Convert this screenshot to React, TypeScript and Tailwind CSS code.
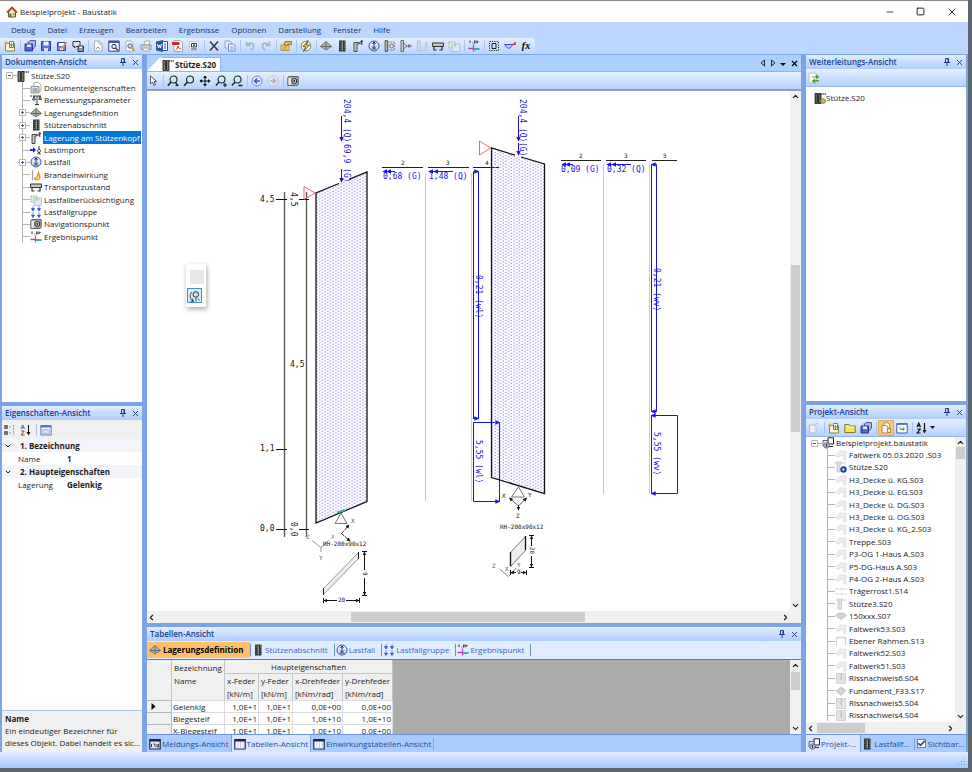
import React from 'react'
import { clsx } from 'clsx'
import { Check, ChevronDown, ChevronLeft, ChevronRight, ChevronUp, Minus, Square, X } from 'lucide-react'

const icons = {
  house: (
    <>
      <path d="M2.5 6v5h7V6L6 2.5z" fill="#f6e3a0" stroke="#6b5320" />
      <path d="M.8 6.5 6 1.3l5.2 5.2" fill="none" stroke="#9b3a22" strokeWidth="1.4" />
      <path d="M3.5 7.5h2V11h-2z" fill="#3d7d3a" />
      <path d="M7 7.5h1.5V9H7z" fill="#3a6dc4" />
    </>
  ),
  newItem: (
    <>
      <path d="M1.5 3.5h9v7.500h-9z" fill="#fdf6cf" stroke="#8a8148" />
      <path d="M5.500 1.500h4v6h-4z" fill="#fff" stroke="#777" />
      <path d="M7.500 3v4M5.500 5h4" stroke="#5a9a3c" />
      <path d="M2 1v4M0 3h4" stroke="#e8a12c" />
    </>
  ),
  saveAll: (
    <>
      <path d="M4 3 6 .500h5.500V6L9 9z" fill="#a9b6f0" stroke="#4a57b0" />
      <path d="M1 4h7.500v7H1z" fill="#5365cc" stroke="#26308c" strokeWidth=".900" />
      <path d="M3 4.500h4v2.500H3z" fill="#e6ebff" />
      <path d="M3 2.500 4.500 1M10 8l1.500-1.500" stroke="#6f7fd6" />
    </>
  ),
  save: (
    <>
      <path d="M1.500 1.500h9v9h-9z" fill="#5a72d6" stroke="#2e3a9c" />
      <path d="M3.500 1.500h5v4h-5z" fill="#f2f5ff" />
      <path d="M4 8h4v3H4z" fill="#cfd8f8" />
    </>
  ),
  saveAs: (
    <>
      <path d="M1.500 2.500h8v8h-8z" fill="#6f86dc" stroke="#3a4aa5" />
      <path d="M3 3h5v3H3zM4 8h3v2H4z" fill="#fff" />
      <path d="M5 9 10.500 2.500" stroke="#e89a2c" strokeWidth="1.800" />
    </>
  ),
  saveComment: (
    <>
      <path d="M1 1.500h7v5H4L2.500 8V6.500H1z" fill="#dfe5ee" stroke="#333" />
      <path d="M6 6h5.500v5.500H6z" fill="#8a95ad" stroke="#333" />
      <path d="M7.500 6.500h2.500V8H7.500z" fill="#fff" />
    </>
  ),
  page: (
    <>
      <path d="M2.500 1h5l2.500 2.500V11h-7.500z" fill="#fff" stroke="#a3adbc" />
      <path d="M7 1v3h3" fill="none" stroke="#a3adbc" />
      <path d="M4 9l2-2 2 2" fill="none" stroke="#6aa56a" />
    </>
  ),
  pageView: (
    <>
      <path d="M.800 1h10.400v10.200H.800z" fill="#fff" stroke="#2c3f86" />
      <path d="M.800 1h10.400v2H.800z" fill="#3c5bb5" />
      <circle cx="6" cy="6.500" r="2.200" fill="#cfe6f5" stroke="#333" />
      <path d="M7.500 8 10 10.500" stroke="#333" strokeWidth="1.200" />
    </>
  ),
  preview: (
    <>
      <path d="M2 1h5l2 2v8H2z" fill="#fff" stroke="#a3adbc" />
      <circle cx="6" cy="6" r="2.200" fill="#cfe6f5" stroke="#555" />
      <path d="M7.500 7.500 10.500 11" stroke="#c78a34" strokeWidth="1.500" />
    </>
  ),
  printer: (
    <>
      <path d="M4 5 5 1h5L9 5z" fill="#fff" stroke="#999" strokeWidth=".800" />
      <path d="M1 5h10v4.500H1z" fill="#d3d7de" stroke="#7c8492" strokeWidth=".800" />
      <path d="M3 8h6v3H3z" fill="#f3f3f3" stroke="#999" strokeWidth=".800" />
      <path d="M9 6h1" stroke="#4b9a3e" />
    </>
  ),
  word: (
    <>
      <path d="M6 1.500h5.500v9H6z" fill="#fff" stroke="#2b579a" />
      <path d="M0 1.500 7 0v12L0 10.500z" fill="#2b579a" />
      <path d="M1.500 4 2.500 8 3.500 5l1 3 1-4" fill="none" stroke="#fff" />
      <path d="M8 4h2M8 6h2M8 8h2" stroke="#2b579a" />
    </>
  ),
  pdf: (
    <>
      <path d="M2 .500h6l2.500 2.500v8.500H2z" fill="#fff" stroke="#aaa" />
      <path d="M0 2h7.500v3H0z" fill="#d6282a" />
      <path d="M3.500 10c2-1 2.500-3 2.500-4 .500 2 2 3 3.500 3" fill="none" stroke="#d6282a" />
    </>
  ),
  imageDoc: (
    <>
      <path d="M1.500 1.500h9v9h-9z" fill="#f7f8fb" stroke="#c3cadb" />
      <path d="M3 9h6M3.500 3.500h5V7h-5z" fill="#fff" stroke="#2c3f66" />
      <circle cx="6" cy="5.300" r="1" fill="#333" />
    </>
  ),
  cut: <path d="M2 1.500 10 10.500M10 1.500 2 10.500" stroke="#2b2f3a" strokeWidth="1.300" />,
  copy: (
    <>
      <path d="M1 1h5l1.500 1.500V8H1z" fill="#e4ebff" stroke="#8fa1d6" />
      <path d="M4.500 4h5L11 5.500V11H4.500z" fill="#eef3ff" stroke="#6f86c8" />
      <path d="M6 7h3.500M6 9h3.500" stroke="#7f93cc" />
    </>
  ),
  undo: <path d="M2.500 1.500v4h4M3 5c3-3 7-2 6.500 1.500C9.300 8.500 8 9.500 6.500 10" fill="none" stroke="#a3b1cb" strokeWidth="1.500" />,
  redo: <path d="M9.500 1.500v4h-4M9 5C6 2 2 3 2.500 6.500 2.700 8.500 4 9.500 5.500 10" fill="none" stroke="#a3b1cb" strokeWidth="1.500" />,
  hand: (
    <>
      <path d="M1 5h8v5.500H1z" fill="#f5dc93" stroke="#a67c22" strokeWidth=".800" />
      <path d="M5 1.500h6.500v3H8L6 6 4 4z" fill="#efb243" stroke="#80622a" strokeWidth=".800" />
      <path d="M2.500 7h5M2.500 9h5" stroke="#a67c22" strokeWidth=".800" />
    </>
  ),
  flash: (
    <>
      <circle cx="6" cy="6" r="4.800" fill="#fffbd8" stroke="#666" strokeWidth=".800" />
      <path d="M8 .500 3 6.500h2.500L3.500 11.500 9.500 5H6.500z" fill="#f5d020" stroke="#333" strokeWidth=".700" />
    </>
  ),
  support: (
    <>
      <path d="M.500 6.500 6 1.500l5.500 5L6 10z" fill="#aeb0a6" stroke="#66685f" strokeWidth=".800" />
      <path d="M6 1.500V10M.500 6.500h11" stroke="#54564f" strokeWidth=".700" />
    </>
  ),
  column: (
    <>
      <path d="M3 .500h6.500v11H3z" fill="#2f3330" />
      <path d="M6.200 1.500v9" stroke="#b9bdb8" />
      <path d="M4 1v10M8.500 1v10" stroke="#697069" strokeDasharray="1 1" />
    </>
  ),
  columnHead: (
    <>
      <path d="M2 2.500h5V4H5v7.500H2z" fill="#c6c8c0" stroke="#3a3d38" strokeWidth=".900" />
      <path d="M7 3h3M9.800.500v4.500M8.500 2 9.800.500 11 2" fill="none" stroke="#222" strokeWidth=".900" />
    </>
  ),
  columnDoc: (
    <>
      <path d="M1 1.500h2.500v10H1zM4.500 1.500H7v10H4.500z" fill="#7a7e79" stroke="#222" strokeWidth=".900" />
      <path d="M7 2h1.500M9 2h1M10.500 2H12" stroke="#555" strokeWidth="1.300" />
    </>
  ),
  loadCase: (
    <>
      <circle cx="6" cy="6" r="5" fill="#dfe7ff" stroke="#2f4fd0" />
      <path d="M6 2v6M6 8.500 4 6.500M6 8.500 8 6.500M3.500 9h5M4.500 4l1.500-2 1.500 2" fill="none" stroke="#223" strokeWidth=".900" />
    </>
  ),
  fixedWall: (
    <>
      <path d="M1 .500h2.500v11H1z" fill="#a8aca4" stroke="#444" strokeWidth=".700" />
      <path d="M4 2h6.500v8H4z" fill="none" stroke="#777" strokeDasharray="1.500 1" />
      <circle cx="7.500" cy="6" r="2" fill="#d5d8cf" stroke="#555" strokeWidth=".700" />
    </>
  ),
  hinge: (
    <>
      <path d="M1 .500h2.500v11H1z" fill="#c9ccc5" stroke="#444" strokeWidth=".700" />
      <path d="M3.500 3 7 6 3.500 9M7 6h4.500M8.500 4.500v3M10 4.500v3" fill="none" stroke="#555" strokeWidth=".800" />
    </>
  ),
  wallDisabled: (
    <>
      <path d="M1.500 1h2.500v10H1.500z" fill="#dfe3ea" stroke="#a3abb9" strokeWidth=".700" />
      <path d="M4 10.500h5.500V3.500L11 2v9" fill="#e6e9ef" stroke="#b8bfcb" />
    </>
  ),
  truck: (
    <>
      <path d="M.500 3h11v3.500H.500z" fill="#c7cac4" stroke="#333" />
      <path d="M2 7v3h2.500M10 7v3H7.500" fill="none" stroke="#333" strokeWidth="1.200" />
    </>
  ),
  consider: (
    <>
      <path d="M1 2h6v6H1z" fill="#e3ecdf" stroke="#9aa" strokeDasharray="1.500 1" />
      <path d="M4 4h7.500v7.500H4z" fill="#dcebf3" stroke="#a9bcc9" strokeWidth=".800" />
      <path d="M5.500 6l2-2 1 1-2 2z" fill="#a5c795" />
    </>
  ),
  resultPoint: (
    <>
      <path d="M.500 8.500H6" stroke="#c03a90" strokeWidth="1.400" />
      <path d="M6 9h5.500" stroke="#1e9aa4" strokeWidth="1.600" />
      <path d="M5.500 4.500v7" stroke="#b84bc0" strokeWidth="1.300" />
      <path d="M2 .500v2.500M4 3h.500M6 1h1.500M7.500 1 6 3h1.700M9 .500 8.800 3 10.500 1" fill="none" stroke="#222" strokeWidth=".900" />
    </>
  ),
  frame: (
    <>
      <path d="M1.500 1.500h9v9h-9z" fill="none" stroke="#222" strokeDasharray="1.200 1.200" />
      <path d="M4 3.500h4v5H4z" fill="#cfe0ff" stroke="#222" />
    </>
  ),
  moment: (
    <>
      <path d="M.500 4.500h11" stroke="#333" />
      <path d="M1 4.500c1.500 5 6 5 7.500 0z" fill="#b6c6ff" stroke="#2f3fd0" strokeWidth=".800" />
      <path d="M8.500 4.500 11.500 2v2.500z" fill="#ef5a5a" stroke="#c22" strokeWidth=".600" />
    </>
  ),
  cursor: <path d="M2.500 1v8l2-2 1.500 3.500 1.300-.600L6 6.500h2.700z" fill="#fff" stroke="#333" strokeWidth=".800" />,
  zoomAll: (
    <>
      <circle cx="6.500" cy="4.500" r="3.500" fill="#bfeee8" stroke="#222" strokeWidth="1.100" />
      <path d="M4 7 .800 10.800" stroke="#222" strokeWidth="1.500" />
      <path d="M8.500 7.500 11 10.500M8.500 10.500H11.500" fill="none" stroke="#222" strokeWidth="1.200" />
    </>
  ),
  zoom: (
    <>
      <circle cx="7" cy="4.500" r="3.500" fill="#bfeee8" stroke="#222" strokeWidth="1.100" />
      <path d="M4.500 7 1 10.800" stroke="#222" strokeWidth="1.600" />
    </>
  ),
  zoomPlus: (
    <>
      <circle cx="6.500" cy="4.500" r="3.500" fill="#bfeee8" stroke="#222" strokeWidth="1.100" />
      <path d="M4 7 .800 10.500M8 10h4M10 8v4" stroke="#222" strokeWidth="1.200" />
    </>
  ),
  zoomMinus: (
    <>
      <circle cx="6.500" cy="4.500" r="3.500" fill="#bfeee8" stroke="#222" strokeWidth="1.100" />
      <path d="M4 7 .800 10.500M7.500 10.500h4" stroke="#222" strokeWidth="1.300" />
    </>
  ),
  move: (
    <>
      <path d="M6 1v10M1 6h10" stroke="#111" />
      <path d="M6 .500 8 3H4zM6 11.500 8 9H4zM.500 6 3 4v4zM11.500 6 9 4v4z" fill="#111" />
    </>
  ),
  back: (
    <>
      <circle cx="6" cy="6" r="5" fill="#e3eaff" stroke="#7486d4" />
      <path d="M9 6H3.500M6 3.500 3.500 6 6 8.500" fill="none" stroke="#3f52c0" strokeWidth="1.500" />
    </>
  ),
  forward: (
    <>
      <circle cx="6" cy="6" r="5" fill="#e5e8ee" stroke="#bcc3d0" />
      <path d="M3 6h5.500M6 3.500 8.500 6 6 8.500" fill="none" stroke="#a5acb9" strokeWidth="1.500" />
    </>
  ),
  camera: (
    <>
      <path d="M.800 2.500 2 1.500h9.200v8L10 10.500H.800z" fill="#a9aba8" stroke="#555" strokeWidth=".900" />
      <path d="M1.500 3H4v7H1.500z" fill="#e8e8e4" />
      <circle cx="7.300" cy="6" r="2.500" fill="#d8dbe0" stroke="#222" />
      <circle cx="7.300" cy="6" r=".900" fill="#111" />
    </>
  ),
  docProps: (
    <>
      <path d="M4 .500h4.500L11 3v6H4z" fill="#fff" stroke="#999" strokeWidth=".800" />
      <path d="M1 4.500h8v6.500H1z" fill="#e3e5ea" stroke="#777" strokeWidth=".800" />
      <path d="M2.500 7h5M2.500 9h5" stroke="#556" strokeWidth=".800" />
    </>
  ),
  scales: (
    <path d="M3 2h8M7 2v8.500M5 10.500h4M4 2 2.500 6h3zM10 2 8.800 5.500h2.700zM0 2h2" fill="none" stroke="#222" strokeWidth=".900" />
  ),
  loadImport: (
    <>
      <path d="M0 6h3.500" stroke="#1414e0" strokeWidth="1.800" />
      <path d="M3 3.200 6 6 3 8.800z" fill="#1414e0" />
      <path d="M9 2v3M7.300 6.500 9 5l1.700 1.500L9 9.500z" fill="none" stroke="#333" />
      <path d="M7 9.800h4" stroke="#333" strokeWidth=".800" />
    </>
  ),
  fire: (
    <>
      <path d="M2.500 1v10" stroke="#9aa4b4" strokeWidth="1.200" />
      <path d="M9 1c-.500 3 1.500 4.500 1.500 7 0 2-1.500 3.500-3.500 3.500S3.500 10 4 8c1 .500 1.500.500 2 0C7.500 6 7.500 3 9 1z" fill="#f0922a" />
      <path d="M6 9c1-.500 2-1.500 2.500-3 .800 2.500.500 4.500-1 5z" fill="#ffdf7c" />
    </>
  ),
  loadGroup: (
    <>
      <path d="M3 0v2M9 0v2M3 6v2M9 6v2" stroke="#7f92ee" />
      <path d="M3 5 1.500 2.500h3zM9 5 7.500 2.500h3zM3 11.500 1.500 9h3zM9 11.500 7.500 9h3z" fill="#2f4fe0" stroke="#2f4fe0" strokeWidth=".800" />
    </>
  ),
  refreshDoc: (
    <>
      <path d="M1 1h7v10H1z" fill="#fafbff" stroke="#a8b2c4" strokeWidth=".800" />
      <path d="M4 4.500h4V2.500L11.500 5 8 7V5.500H4zM11 8H7V6.500L3.500 9 7 11.500V9.500h4z" fill="#4da032" />
    </>
  ),
  linkedColumn: (
    <>
      <path d="M1 1.500h2.500v10H1zM4.500 1.500H7v10H4.500z" fill="#5a5e59" stroke="#222" strokeWidth=".900" />
      <path d="M7 2h1.500M9 2h1M10.500 2H12" stroke="#555" strokeWidth="1.300" />
      <circle cx="9" cy="9" r="2.500" fill="#b9b95a" stroke="#777638" strokeWidth=".700" />
    </>
  ),
  categories: (
    <>
      <path d="M.500 1.500h3v3h-3zM.500 7.500h3v3h-3z" fill="#fff" stroke="#444" strokeWidth=".800" />
      <path d="M1 3h2M2 2v2M1 9h2M2 8v2" stroke="#111" strokeWidth=".700" />
      <path d="M5 3h3M5 9h3M9.500 1v10" stroke="#7f9ccf" strokeDasharray="2 1" />
    </>
  ),
  sortAz: (
    <>
      <path d="M1 5 2.700 1 4.500 5M1.700 3.800h2" fill="none" stroke="#3c63c7" />
      <path d="M1.200 7h3L1.200 11h3.300" fill="none" stroke="#a83030" />
      <path d="M8.500 1v9" stroke="#111" />
      <path d="M6.500 8h4l-2 3.500z" fill="#111" />
    </>
  ),
  sortBlack: (
    <>
      <path d="M1 5 2.700 1 4.500 5M1.700 3.800h2M1.200 7h3L1.200 11h3.300M8.500 1v9" fill="none" stroke="#111" strokeWidth="1.200" />
      <path d="M6.500 8h4l-2 3.500z" fill="#111" />
    </>
  ),
  propPage: (
    <>
      <path d="M.800 1.500h10.400v9.500H.800z" fill="#f4f8ff" stroke="#5b78b8" />
      <path d="M.800 1.500h10.400v2H.800z" fill="#4f7bd0" />
      <path d="M2.500 5.500h7v4h-7z" fill="#d6e0f3" stroke="#8fa5cf" strokeWidth=".700" />
    </>
  ),
  openDim: (
    <>
      <path d="M1.500 3h5L8 4.500V11H1.500z" fill="#eceff4" stroke="#b4bcc9" />
      <path d="M6 3.500C7 1 9 1 10.500 2.500" fill="none" stroke="#b4bcc9" />
    </>
  ),
  folder: (
    <>
      <path d="M.800 2.500H5l1 1.500h5.200v6.500H.800z" fill="#f8e45a" stroke="#86792a" />
      <path d="M2 5h8" stroke="#fff8c0" />
    </>
  ),
  copies: (
    <>
      <path d="M4 .800h4L9.500 2.500V7H4z" fill="#fff" stroke="#8c7a58" strokeWidth=".800" />
      <path d="M2 3.500h4.500L8 5v6H2z" fill="#fff6e0" stroke="#8c7a58" strokeWidth=".800" />
      <path d="M7.500 6.500h3v4h-3z" fill="#ffe9bf" stroke="#8c7a58" strokeWidth=".800" />
    </>
  ),
  sync: (
    <>
      <path d="M.800 1.500h10.400v9.500H.800z" fill="#fff" stroke="#3c5bb5" />
      <path d="M.800 1.500h10.400v1.500H.800z" fill="#5f86d8" />
      <path d="M4 6.500h3V5L9 7 7 9V8H4z" fill="#55a33a" />
      <path d="M3 5.500h2" stroke="#e3c02c" strokeWidth="1.500" />
    </>
  ),
  project: (
    <>
      <path d="M6 .800h5.500V7H6z" fill="#fff" stroke="#222" />
      <path d="M1 3.500h5V9H1z" fill="#dfe3f5" stroke="#444" strokeWidth=".800" />
      <circle cx="4.500" cy="8.500" r="2.700" fill="#b5b8dc" stroke="#55588f" strokeWidth=".800" />
      <path d="M4.500 7v3" stroke="#333" />
      <path d="M7 9.500h4" stroke="#222" />
    </>
  ),
  shell: <path d="M1.500 5 5 2h6v9H8.500V6.500H5V8H1.500z" fill="#ececee" stroke="#dcdde0" strokeWidth=".700" />,
  gridBeam: <path d="M0 4h12M0 9h12" stroke="#cfd1d5" strokeDasharray="4 1" />,
  columnDim: <path d="M2 1h6v2H6.500v8.500H3V3H2zM9 2h3" fill="#dcdee2" stroke="#c8cacf" strokeWidth=".800" />,
  slab: <path d="M.500 5.500 3.500 3h5l3 2.500L6 9.500z" fill="#cfd1d4" stroke="#b6b8bc" strokeWidth=".700" />,
  planeFrame: <path d="M1.500 10.500V2.500h9v8" fill="none" stroke="#d3d5d9" strokeWidth="1.300" />,
  crack: (
    <>
      <path d="M1.500 1.500h9v10h-9z" fill="#e2e3e5" stroke="#c8cace" strokeWidth=".800" />
      <path d="M5.500 1.500 7 4 5.500 6 7 8.500" fill="none" stroke="#aaa" strokeWidth=".800" />
    </>
  ),
  foundation: (
    <>
      <path d="M1 6 6 2l5 3.500L6 10.500z" fill="#d6d8db" stroke="#bfc1c5" strokeWidth=".700" />
      <circle cx="6" cy="6" r="2" fill="#e8e9eb" stroke="#aaa" strokeWidth=".600" />
    </>
  ),
  currentColumn: (
    <>
      <path d="M1 1h6v2H5v8H2V3H1zM8 2h3" fill="#dcdee2" stroke="#c0c3c8" strokeWidth=".800" />
      <circle cx="8.500" cy="8.500" r="3.200" fill="#1d46a0" />
      <path d="M7.500 7v3l2.500-1.500z" fill="#fff" />
    </>
  ),
  tableDark: (
    <>
      <path d="M.800 1.500h10.400v9.500H.800z" fill="#fff" stroke="#1c2350" strokeWidth="1.200" />
      <path d="M.800 1.500h10.400v2H.800z" fill="#1c2350" />
      <path d="M4 4v7M6.500 4v7M9 4v7" stroke="#a7aede" strokeWidth=".700" />
    </>
  ),
  messages: (
    <>
      <path d="M.800 1.500h10.400v9.500H.800z" fill="#dfe3ea" stroke="#1c2350" strokeWidth="1.200" />
      <path d="M.800 1.500h10.400v2H.800z" fill="#1c2350" />
      <path d="M2.500 6v3M4.500 6h1.500v3M8 6v3h1.500V6" fill="none" stroke="#444" />
    </>
  ),
  orbit: (
    <>
      <circle cx="6.800" cy="4.500" r="2.800" fill="#bfe0f5" stroke="#333" />
      <path d="M7 7.500v4M9 8.500l1.500 2M3 2C0 5 1 9 4 11M3.500 8.500l1 3-3-.500" fill="none" stroke="#333" strokeWidth=".900" />
    </>
  ),
}

type IconName = keyof typeof icons

const Icon: React.FC<{ name: IconName; className?: string }> = ({ name, className }) => (
  <svg viewBox="0 0 12 12" aria-hidden="true" className={clsx('size-3 shrink-0', className)}>
    {icons[name]}
  </svg>
)

const ToolButton: React.FC<{ name: IconName; label: string; active?: boolean }> = ({ name, label, active }) => (
  <button
    type="button"
    aria-label={label}
    className={clsx(
      'flex h-4 w-4 shrink-0 items-center justify-center',
      active && 'bg-[#ffc46e] outline -outline-offset-1 outline-[#d9ac62]'
    )}
  >
    <Icon name={name} />
  </button>
)

const Separator = () => <span className="mr-px ml-0.5 h-3 w-px shrink-0 bg-[#a9c5ee]" />

const Pin = () => (
  <svg viewBox="0 0 8 8" className="size-2" aria-hidden="true">
    <path d="M2.500 .500h3v4h-3zM1 4.500h6M4 4.500V8M5 1v3" fill="none" stroke="#1b3f86" />
  </svg>
)

const PanelHeader: React.FC<{ title: string }> = ({ title }) => (
  <header className="flex h-[14px] shrink-0 items-center bg-linear-to-b from-[#e2edff] to-[#aecdfd] pr-0.5 pl-[3px] text-[#15428b]">
    <h2 className="flex-1 truncate font-semibold">{title}</h2>
    <button type="button" aria-label={`${title} anheften`} className="mr-1">
      <Pin />
    </button>
    <button type="button" aria-label={`${title} schließen`}>
      <X size={9} strokeWidth={2.5} />
    </button>
  </header>
)

const menu = ['Debug', 'Datei', 'Erzeugen', 'Bearbeiten', 'Ergebnisse', 'Optionen', 'Darstellung', 'Fenster', 'Hilfe']

const mainTools: [IconName, string][][] = [
  [['newItem', 'Neu']],
  [['saveAll', 'Alles speichern'], ['save', 'Speichern'], ['saveAs', 'Speichern unter'], ['saveComment', 'Speichern mit Kommentar']],
  [
    ['page', 'Seite'],
    ['pageView', 'Seitenansicht'],
    ['preview', 'Vorschau'],
    ['printer', 'Drucken'],
    ['word', 'Word'],
    ['pdf', 'PDF'],
    ['imageDoc', 'Bild'],
  ],
  [['cut', 'Ausschneiden'], ['copy', 'Kopieren']],
  [['undo', 'Rückgängig'], ['redo', 'Wiederholen']],
  [['hand', 'Eigenschaften']],
  [['flash', 'Berechnen']],
  [
    ['support', 'Lagerungsdefinition'],
    ['column', 'Stützenabschnitt'],
    ['columnHead', 'Lagerung am Stützenkopf'],
    ['loadCase', 'Lastfall'],
    ['fixedWall', 'Einspannung'],
    ['hinge', 'Gelenk'],
    ['wallDisabled', 'Wand'],
    ['truck', 'Transportzustand'],
    ['consider', 'Lastfallberücksichtigung'],
  ],
  [['resultPoint', 'Ergebnispunkt']],
  [['frame', 'Rahmen'], ['moment', 'Momente']],
]

const documentTree: { icon: IconName; label: string; expandable?: boolean; selected?: boolean }[] = [
  { icon: 'docProps', label: 'Dokumenteigenschaften' },
  { icon: 'scales', label: 'Bemessungsparameter' },
  { icon: 'support', label: 'Lagerungsdefinition', expandable: true },
  { icon: 'column', label: 'Stützenabschnitt', expandable: true },
  { icon: 'columnHead', label: 'Lagerung am Stützenkopf', expandable: true, selected: true },
  { icon: 'loadImport', label: 'Lastimport' },
  { icon: 'loadCase', label: 'Lastfall', expandable: true },
  { icon: 'fire', label: 'Brandeinwirkung' },
  { icon: 'truck', label: 'Transportzustand' },
  { icon: 'consider', label: 'Lastfallberücksichtigung' },
  { icon: 'loadGroup', label: 'Lastfallgruppe' },
  { icon: 'camera', label: 'Navigationspunkt' },
  { icon: 'resultPoint', label: 'Ergebnispunkt' },
]

const projectTree: [IconName, string][] = [
  ['shell', 'Faltwerk 05.03.2020 .S03'],
  ['currentColumn', 'Stütze.S20'],
  ['shell', 'H3_Decke ü. KG.S03'],
  ['shell', 'H3_Decke ü. EG.S03'],
  ['shell', 'H3_Decke ü. DG.S03'],
  ['shell', 'H3_Decke ü. OG.S03'],
  ['shell', 'H3_Decke ü. KG_2.S03'],
  ['shell', 'Treppe.S03'],
  ['shell', 'P3-OG 1-Haus A.S03'],
  ['shell', 'P5-DG-Haus A.S03'],
  ['shell', 'P4-OG 2-Haus A.S03'],
  ['gridBeam', 'Trägerrost1.S14'],
  ['columnDim', 'Stütze3.S20'],
  ['slab', '150xxx.S07'],
  ['shell', 'Faltwerk53.S03'],
  ['planeFrame', 'Ebener Rahmen.S13'],
  ['shell', 'Faltwerk52.S03'],
  ['shell', 'Faltwerk51.S03'],
  ['crack', 'Rissnachweis6.S04'],
  ['foundation', 'Fundament_F33.S17'],
  ['crack', 'Rissnachweis5.S04'],
  ['crack', 'Rissnachweis4.S04'],
]

const treeRow = 'flex h-3 items-center [&:nth-child(5n)]:h-[13px] [&:nth-child(5n+3)]:h-[13px]'

const Expander: React.FC<{ open?: boolean }> = ({ open }) => (
  <svg viewBox="0 0 7 7" className="size-[7px] shrink-0" aria-hidden="true">
    <path d="M.5 .5h6v6h-6z" fill="#fff" stroke="#b5b5b5" />
    <path d={open ? 'M2 3.5h3' : 'M2 3.5h3M3.5 2v3'} stroke="#4a5a80" />
  </svg>
)

const DocumentPanel = () => (
  <section className="flex min-h-0 flex-1 flex-col bg-white">
    <PanelHeader title="Dokumenten-Ansicht" />
    <div className="flex h-[13px] items-center pl-1">
      <Expander open />
      <span className="h-px w-1 bg-[#b5b5b5]" />
      <Icon name="columnDoc" />
      <span className="pl-0.5">Stütze.S20</span>
    </div>
    <ul className="ml-5 border-l border-[#b5b5b5]">
      {documentTree.map((item) => (
        <li key={item.label} className={treeRow}>
          {item.expandable ? (
            <span className="-ml-1 flex items-center">
              <Expander />
              <span className="h-px w-1 bg-[#b5b5b5]" />
            </span>
          ) : (
            <span className="h-px w-[7px] bg-[#b5b5b5]" />
          )}
          <Icon name={item.icon} />
          <button
            type="button"
            className={clsx('ml-px h-full px-px whitespace-nowrap', item.selected && 'bg-[#0078d7] text-white')}
          >
            {item.label}
          </button>
        </li>
      ))}
    </ul>
  </section>
)

const PropertyPanel = () => (
  <section className="flex h-[346px] flex-col bg-white">
    <PanelHeader title="Eigenschaften-Ansicht" />
    <div className="flex h-[19px] items-center bg-[#f0f0f0]">
      <ToolButton name="categories" label="Nach Kategorien" />
      <ToolButton name="sortAz" label="Alphabetisch" />
      <Separator />
      <ToolButton name="propPage" label="Eigenschaftenseiten" />
    </div>
    <dl className="grid grid-cols-[16px_49px_1fr] leading-[13px]">
      <dt className="col-span-3 flex items-center bg-[#f3f5fa] pl-0.5 font-bold">
        <ChevronDown size={8} strokeWidth={3} className="mr-2" />
        1. Bezeichnung
      </dt>
      <dt className="col-span-2 pl-4">Name</dt>
      <dd className="font-bold">1</dd>
      <dt className="col-span-3 flex items-center bg-[#f3f5fa] pl-0.5 font-bold">
        <ChevronDown size={8} strokeWidth={3} className="mr-2" />
        2. Haupteigenschaften
      </dt>
      <dt className="col-span-2 pl-4">Lagerung</dt>
      <dd className="font-bold">Gelenkig</dd>
    </dl>
    <div className="mt-auto h-[42px] border-t border-[#a9c4ee] bg-[#f0f0f0] pt-0.5 pl-[3px] leading-3 whitespace-nowrap">
      <p className="font-bold">Name</p>
      <p>
        Ein eindeutiger Bezeichner für
        <br />
        dieses Objekt. Dabei handelt es sic...
      </p>
    </div>
  </section>
)

const DrawText: React.FC<{ x: number; y: number; children: string; small?: boolean; fill?: string; vertical?: boolean }> = ({
  x,
  y,
  children,
  small,
  fill = '#111',
  vertical,
}) => (
  <text
    x={x}
    y={y}
    fill={fill}
    className={small ? 'text-[6px]' : 'text-[8px]'}
    transform={vertical ? `rotate(90 ${x} ${y})` : undefined}
  >
    {children}
  </text>
)

const blue = '#1a12e0'

const ColumnDrawing = () => (
  <svg
    width="643"
    height="520"
    viewBox="147 91 643 520"
    role="img"
    aria-label="Stütze mit Lasten"
    className="block shrink-0 font-['DejaVu_Sans_Mono',monospace]"
  >
    <defs>
      <pattern id="dots" width="5.4" height="3" patternUnits="userSpaceOnUse">
        <path d="M.5 .3h1v1.100h-1zM3.200 1.800h1v1.100h-1z" fill="#7d76ee" />
      </pattern>
      <marker id="arrowBlue" viewBox="0 0 6 6" refX="5" refY="3" markerWidth="5" markerHeight="5" markerUnits="userSpaceOnUse" orient="auto">
        <path d="M0 .300 6 3 0 5.700z" fill={blue} />
      </marker>
      <marker id="arrowDark" viewBox="0 0 6 6" refX="5" refY="3" markerWidth="4" markerHeight="4" markerUnits="userSpaceOnUse" orient="auto-start-reverse">
        <path d="M0 .300 6 3 0 5.700z" fill="#111" />
      </marker>
    </defs>

    {/* height dimensions */}
    <path d="M284.500 192v345M306.500 192v345" stroke="#555" strokeWidth="1.300" />
    <path d="M276 199.500h11M299 199.500h10M276 449.500h11M276 529.500h11M299 529.500h10" stroke="#111" />
    <DrawText x={260} y={202}>4,5</DrawText>
    <DrawText x={291} y={192} vertical>4,5</DrawText>
    <DrawText x={290} y={367}>4,5</DrawText>
    <DrawText x={260} y={451}>1,1</DrawText>
    <DrawText x={260} y={531}>0,0</DrawText>
    <DrawText x={291} y={522} vertical>0,0</DrawText>

    {/* column, first axis */}
    <path d="M316 193 367 172V501L316 523z" fill="url(#dots)" />
    <path d="M339 183.500 316 193V523L367 501.500V172L349 179.300" fill="none" stroke="#111" strokeWidth="1.300" />
    <path d="M304 186.500v13l11-6.500z" fill="none" stroke="#e0405a" strokeWidth=".800" />
    <g stroke={blue} fill="none">
      <path d="M341.500 116v25" markerEnd="url(#arrowBlue)" />
      <path d="M341.500 169v13" markerEnd="url(#arrowBlue)" />
    </g>
    <DrawText x={344} y={99} fill={blue} vertical>204,4 (Q)</DrawText>
    <DrawText x={344} y={144} fill={blue} vertical>69,9 (G)</DrawText>

    {/* loads, first axis */}
    <path d="M382 167.500h41M428 167.500h41M473 167.500h26" stroke="#222" />
    <DrawText x={401} y={165} small>2</DrawText>
    <DrawText x={446} y={165} small>3</DrawText>
    <DrawText x={485} y={165} small>4</DrawText>
    <path d="M425.500 173v328" stroke="#c4c4c4" />
    <path d="M471.500 173v328" stroke="#c9c9ee" />
    <g stroke={blue} fill="none">
      <path d="M395 171.500h-8" markerEnd="url(#arrowBlue)" />
      <path d="M388 171.500h-5" markerEnd="url(#arrowBlue)" />
      <path d="M453 171.500h-19" markerEnd="url(#arrowBlue)" />
      <path d="M434 171.500h-5" markerEnd="url(#arrowBlue)" />
      <path d="M473.500 171.500v247.500M478.500 171.500v247.500" />
      <path d="M473.500 171.500h5" markerEnd="url(#arrowBlue)" />
      <path d="M473.500 418.500h5" markerEnd="url(#arrowBlue)" />
      <path d="M499.500 501.500v-79M473.500 422.500v79" />
      <path d="M473.500 422.500h26" markerEnd="url(#arrowBlue)" />
      <path d="M473.500 501.500h26" markerEnd="url(#arrowBlue)" />
    </g>
    <DrawText x={383} y={179} fill={blue}>0,68 (G)</DrawText>
    <DrawText x={429} y={179} fill={blue}>1,48 (Q)</DrawText>
    <DrawText x={476} y={275} fill={blue} vertical>0,21 (wl)</DrawText>
    <DrawText x={476} y={440} fill={blue} vertical>5,55 (wl)</DrawText>

    {/* column, second axis */}
    <path d="M491 148 544.500 164V493.500L491 477.500z" fill="url(#dots)" />
    <path d="M515 155.200 491.500 148V477.500L544.500 493.500V164L521 157" fill="none" stroke="#111" strokeWidth="1.300" />
    <path d="M479.500 141v14l11-7z" fill="none" stroke="#e0405a" strokeWidth=".800" />
    <g stroke={blue} fill="none">
      <path d="M518.500 116v25" markerEnd="url(#arrowBlue)" />
      <path d="M518.500 143v12" markerEnd="url(#arrowBlue)" />
    </g>
    <DrawText x={520} y={99} fill={blue} vertical>204,4 (Q)</DrawText>
    <DrawText x={520} y={142} fill={blue} vertical>(G)</DrawText>

    {/* loads, second axis */}
    <path d="M561 160.500h40M606 160.500h40M652 160.500h25" stroke="#222" />
    <DrawText x={579} y={158} small>2</DrawText>
    <DrawText x={624} y={158} small>3</DrawText>
    <DrawText x={663} y={158} small>5</DrawText>
    <path d="M603.500 164v330" stroke="#c4c4c4" />
    <path d="M649.500 164v330" stroke="#c9c9ee" />
    <g stroke={blue} fill="none">
      <path d="M573 164.500h-7" markerEnd="url(#arrowBlue)" />
      <path d="M567 164.500h-5" markerEnd="url(#arrowBlue)" />
      <path d="M631 164.500h-19" markerEnd="url(#arrowBlue)" />
      <path d="M612 164.500h-5" markerEnd="url(#arrowBlue)" />
      <path d="M651.500 164.500v247M656.500 164.500v247" />
      <path d="M656.500 164.500h-5" markerEnd="url(#arrowBlue)" />
      <path d="M656.500 411.500h-5" markerEnd="url(#arrowBlue)" />
      <path d="M651.500 415.500v78M677.500 415.500v78" />
      <path d="M677.500 415.500h-26" markerEnd="url(#arrowBlue)" />
      <path d="M677.500 493.500h-26" markerEnd="url(#arrowBlue)" />
    </g>
    <DrawText x={561} y={172} fill={blue}>0,09 (G)</DrawText>
    <DrawText x={607} y={172} fill={blue}>0,32 (Q)</DrawText>
    <DrawText x={654} y={268} fill={blue} vertical>0,21 (wv)</DrawText>
    <DrawText x={654} y={432} fill={blue} vertical>5,55 (wv)</DrawText>

    {/* footing and section, first axis */}
    <path d="M337 512.500 345 510" stroke="#38b8a8" strokeWidth="2" />
    <path d="M341 513 335 523.500h12z" fill="none" stroke="#777" />
    <path d="M349 525 341.500 533.500 350 541" fill="none" stroke="#333" strokeDasharray="7 1" markerStart="url(#arrowDark)" markerEnd="url(#arrowDark)" />
    <path d="M312 540.500 321 547.500 329 540M321 547v5" fill="none" stroke="#999" />
    <DrawText x={351} y={523} small fill="#444">X</DrawText>
    <DrawText x={331} y={539} small fill="#777">X</DrawText>
    <DrawText x={306} y={539} small fill="#777">Z</DrawText>
    <DrawText x={319} y={560} small fill="#555">Y</DrawText>
    <DrawText x={323} y={546} small>RH-200x90x12</DrawText>
    <path d="M323.500 588.500 358.500 552.500V558.500L323.500 594.500z" fill="#eee" stroke="#999" />
    <path d="M323.500 588v7M358.500 552v7" stroke="#222" />
    <g fill="none" stroke="#111">
      <path d="M364.500 570V552" markerEnd="url(#arrowDark)" />
      <path d="M364.500 578V595" markerEnd="url(#arrowDark)" />
      <path d="M362 551.500h5M362 595.500h5M323.500 598v5M359.500 598v5" />
      <path d="M337 600.500h-13" markerEnd="url(#arrowDark)" />
      <path d="M346 600.500h13" markerEnd="url(#arrowDark)" />
    </g>
    <DrawText x={338} y={602} small>20</DrawText>
    <DrawText x={363} y={572} small vertical>9</DrawText>

    {/* footing and section, second axis */}
    <path d="M518.500 487 511.500 497h13z" fill="none" stroke="#777" />
    <path d="M509.500 498 518.500 506 526.500 498" fill="none" stroke="#555" markerStart="url(#arrowDark)" markerEnd="url(#arrowDark)" />
    <path d="M518.500 505v5" stroke="#222" markerEnd="url(#arrowDark)" />
    <DrawText x={502} y={498} small>X</DrawText>
    <DrawText x={528} y={497} small>Y</DrawText>
    <DrawText x={516} y={518} small>Z</DrawText>
    <DrawText x={500} y={529} small>RH-200x90x12</DrawText>
    <path d="M510.500 552.500 525.500 536.500V550.500L510.500 566.500z" fill="#eee" stroke="#777" />
    <path d="M510.500 552v14M525.500 536v14" stroke="#111" strokeWidth="1.300" />
    <path d="M499.500 569 508.500 576.500 516 568" fill="none" stroke="#888" />
    <g fill="none" stroke="#111">
      <path d="M531.500 546V536" markerEnd="url(#arrowDark)" />
      <path d="M531.500 556v11" markerEnd="url(#arrowDark)" />
      <path d="M529 535.500h5M529 567.500h5M510.500 570v5M526.500 570v5" />
      <path d="M516 572.500h-5" markerEnd="url(#arrowDark)" />
      <path d="M521 572.500h5" markerEnd="url(#arrowDark)" />
    </g>
    <DrawText x={492} y={568} small fill="#555">Z</DrawText>
    <DrawText x={505} y={571} small fill="#555">X</DrawText>
    <DrawText x={517} y={567} small fill="#555">Y</DrawText>
    <DrawText x={517} y={574} small>9</DrawText>
    <DrawText x={530} y={547} small vertical>20</DrawText>
  </svg>
)

const VScroll: React.FC<{ before: string; thumb: string }> = ({ before, thumb }) => (
  <div className="flex w-[11px] shrink-0 flex-col items-center bg-[#f0f0f0] py-px">
    <ChevronUp size={9} strokeWidth={3} className="shrink-0" />
    <div className="flex w-full flex-1 flex-col items-center">
      <span className={before} />
      <span className={clsx('w-[9px] bg-[#cdcdcd]', thumb)} />
    </div>
    <ChevronDown size={9} strokeWidth={3} className="shrink-0" />
  </div>
)

const HScroll: React.FC<{ before: string; thumb: string }> = ({ before, thumb }) => (
  <div className="flex h-3 min-w-0 flex-1 items-center bg-[#f0f0f0]">
    <ChevronLeft size={9} strokeWidth={3} className="shrink-0" />
    <div className="flex min-w-0 flex-1">
      <span className={before} />
      <span className={clsx('h-2.5 bg-[#cdcdcd]', thumb)} />
    </div>
    <ChevronRight size={9} strokeWidth={3} className="shrink-0" />
  </div>
)

const EditorPanel = () => (
  <section className="flex min-h-0 flex-1 flex-col bg-[#add1ff]">
    <div className="flex h-4 items-end">
      <div className="flex h-[14px] items-center">
        <svg viewBox="0 0 15 14" className="h-[14px] w-[15px]" aria-hidden="true">
          <path d="M0 14 12 1.500Q13 .500 15 .500V14z" fill="#fff" />
        </svg>
        <button type="button" className="flex h-full items-center gap-px border-t border-r border-[#8fb5ee] bg-white pr-1 font-bold">
          <Icon name="columnDoc" />
          Stütze.S20
        </button>
      </div>
      <div className="ml-auto flex h-full items-center gap-1 pr-0.5 text-black">
        <button type="button" aria-label="Vorheriges Dokument">
          <svg viewBox="0 0 6 8" className="h-2 w-1.5"><path d="M4.500 1v6L1 4z" fill="none" stroke="#222" /></svg>
        </button>
        <button type="button" aria-label="Nächstes Dokument">
          <svg viewBox="0 0 6 8" className="h-2 w-1.5"><path d="M1.500 1v6L5 4z" fill="none" stroke="#222" /></svg>
        </button>
        <button type="button" aria-label="Dokumentliste">
          <svg viewBox="0 0 6 8" className="h-2 w-1.5"><path d="M0 4h6L3 7z" fill="#000" /></svg>
        </button>
        <button type="button" aria-label="Dokument schließen">
          <X size={9} strokeWidth={3} />
        </button>
      </div>
    </div>
    <div className="flex h-[18px] items-center border-t border-[#8fb5ee] bg-linear-to-b from-[#e6f0ff] to-[#b4d2ff]">
      <button type="button" aria-label="Auswählen" className="flex h-4 w-[14px] items-center justify-center">
        <Icon name="cursor" />
      </button>
      <Separator />
      <ToolButton name="zoomAll" label="Alles zeigen" />
      <ToolButton name="zoom" label="Zoom" />
      <ToolButton name="move" label="Verschieben" />
      <ToolButton name="zoomPlus" label="Vergrößern" />
      <ToolButton name="zoomMinus" label="Verkleinern" />
      <Separator />
      <ToolButton name="back" label="Zurück" />
      <ToolButton name="forward" label="Vor" />
      <Separator />
      <ToolButton name="camera" label="Navigationspunkt" />
    </div>
    <div className="flex min-h-0 flex-1 border-t-2 border-[#9c9cb0] bg-white">
      <div className="relative min-w-0 flex-1 overflow-hidden">
        <ColumnDrawing />
        <div className="absolute top-[173px] left-[39px] flex w-5 flex-col items-end gap-1 bg-white pt-1.5 pb-1 shadow-[1px_2px_5px_rgba(0,0,0,0.35)]">
          <span className="mr-0.5 size-3.5 bg-[#e8e8e8]" />
          <button type="button" aria-label="Ansicht drehen" className="mr-1 flex size-[15px] items-center justify-center border border-[#3c8ddb] bg-[#dcecfb]">
            <Icon name="orbit" />
          </button>
        </div>
      </div>
      <VScroll before="h-[164px]" thumb="h-[167px]" />
    </div>
    <div className="flex bg-[#f0f0f0]">
      <HScroll before="w-[195px]" thumb="w-[234px]" />
      <span className="w-[11px] shrink-0" />
    </div>
  </section>
)

const tableTabs: [IconName, string][] = [
  ['column', 'Stützenabschnitt'],
  ['loadCase', 'Lastfall'],
  ['loadGroup', 'Lastfallgruppe'],
  ['resultPoint', 'Ergebnispunkt'],
]

const tableRows = [
  ['Gelenkig', '1,0E+1', '1,0E+1', '0,0E+00', '0,0E+00'],
  ['Biegesteif', '1,0E+1', '1,0E+1', '1,0E+10', '1,0E+10'],
  ['X-Biegesteif', '1,0E+1', '1,0E+1', '1,0E+10', '0,0E+00'],
]

const headCell = 'border-r border-[#c4c4c4] px-0.5 text-left font-normal'

const TablePanel = () => (
  <section className="flex h-[125px] flex-col bg-[#8db4f2]">
    <PanelHeader title="Tabellen-Ansicht" />
    <div className="flex h-[18px] items-center bg-[#e0ecff] py-px text-[#3b64b5]">
      <button type="button" className="flex h-full w-[103px] items-center gap-0.5 bg-[#ffc069] pl-0.5 font-bold text-black">
        <Icon name="support" />
        Lagerungsdefinition
      </button>
      {tableTabs.map(([icon, label]) => (
        <button key={label} type="button" className="flex h-3 items-center gap-px border-l border-[#6f8fc9] pr-1.5 pl-px">
          <Icon name={icon} />
          {label}
        </button>
      ))}
      <span className="h-3 w-px bg-[#6f8fc9]" />
    </div>
    <div className="flex min-h-0 flex-1 border-t border-[#777] bg-[#ababab]">
      <div className="min-w-0 flex-1 overflow-hidden">
        <table className="w-[246px] table-fixed border-separate border-spacing-0 bg-white text-[#222]">
          <colgroup>
            <col className="w-[25px]" />
            <col className="w-[53px]" />
            <col className="w-[34px]" />
            <col className="w-[34px]" />
            <col className="w-[50px]" />
            <col className="w-[50px]" />
          </colgroup>
          <thead className="bg-[#f0f0f0] leading-[13px] whitespace-nowrap">
            <tr>
              <th rowSpan={3} className={headCell} aria-label="Zeilenauswahl" />
              <th className={headCell}>Bezeichnung</th>
              <th colSpan={4} className="border-r border-b border-[#c4c4c4] text-center font-normal">
                Haupteigenschaften
              </th>
            </tr>
            <tr>
              <th className={headCell}>Name</th>
              <th className={headCell}>x-Feder</th>
              <th className={headCell}>y-Feder</th>
              <th className={headCell}>x-Drehfeder</th>
              <th className={headCell}>y-Drehfeder</th>
            </tr>
            <tr>
              <th className={headCell} />
              <th className={headCell}>[kN/m]</th>
              <th className={headCell}>[kN/m]</th>
              <th className={headCell}>[kNm/rad]</th>
              <th className={headCell}>[kNm/rad]</th>
            </tr>
          </thead>
          <tbody className="leading-[11px]">
            {tableRows.map((row, index) => (
              <tr key={row[0]}>
                <td className="border-t border-r border-[#b8b8b8] bg-[#f0f0f0] pl-1">
                  {index === 0 && (
                    <svg viewBox="0 0 5 7" className="h-[7px] w-[5px]"><path d="M.500 0 4.500 3.500.500 7z" fill="#000" /></svg>
                  )}
                </td>
                {row.map((value, column) => (
                  <td key={column} className={clsx('border-t border-r border-[#dcdcdc] px-px', column > 0 && 'text-right')}>
                    {value}
                  </td>
                ))}
              </tr>
            ))}
          </tbody>
        </table>
      </div>
      <VScroll before="h-0.5" thumb="h-[18px]" />
    </div>
    <nav className="flex h-[18px] shrink-0 items-center border-t border-[#6b93d6] bg-[#a9cbfd] text-[#1d4b9c]">
      <button type="button" className="flex h-full items-center gap-px border-r border-[#7ba1df] px-0.5">
        <Icon name="messages" />
        Meldungs-Ansicht
      </button>
      <button type="button" className="flex h-full items-center gap-px border-r border-[#7ba1df] bg-[#d8e7ff] px-0.5">
        <Icon name="tableDark" />
        Tabellen-Ansicht
      </button>
      <button type="button" className="flex h-3 items-center gap-px border-r border-[#7ba1df] px-0.5">
        <Icon name="tableDark" />
        Einwirkungstabellen-Ansicht
      </button>
    </nav>
  </section>
)

const ForwardPanel = () => (
  <section className="flex min-h-0 flex-1 flex-col bg-white">
    <PanelHeader title="Weiterleitungs-Ansicht" />
    <div className="flex h-[18px] items-center border-b border-[#8fb5ee] bg-linear-to-b from-[#e6f0ff] to-[#b4d2ff]">
      <ToolButton name="refreshDoc" label="Aktualisieren" />
    </div>
    <div className="flex h-[22px] items-center pl-2">
      <Icon name="linkedColumn" />
      Stütze.S20
    </div>
  </section>
)

const ProjectPanel = () => (
  <section className="flex h-[347px] flex-col bg-white">
    <PanelHeader title="Projekt-Ansicht" />
    <div className="flex h-[18px] shrink-0 items-center border-b border-[#8fb5ee] bg-linear-to-b from-[#e6f0ff] to-[#b4d2ff]">
      <ToolButton name="openDim" label="Öffnen" />
      <Separator />
      <ToolButton name="newItem" label="Neu" />
      <ToolButton name="folder" label="Ordner" />
      <ToolButton name="saveAll" label="Alles speichern" />
      <Separator />
      <ToolButton name="copies" label="Kopien" active />
      <ToolButton name="sync" label="Abgleichen" />
      <Separator />
      <ToolButton name="sortBlack" label="Sortieren" />
      <svg viewBox="0 0 5 3" className="h-[3px] w-[5px]" aria-hidden="true"><path d="M0 0h5L2.500 3z" fill="#111" /></svg>
    </div>
    <div className="flex min-h-0 flex-1">
      <div className="min-w-0 flex-1 overflow-hidden">
        <div className="flex h-3 items-center pl-[5px]">
          <Expander open />
          <span className="h-px w-1 bg-[#b5b5b5]" />
          <Icon name="project" />
          <span className="pl-0.5">Beispielprojekt.baustatik</span>
        </div>
        <ul className="ml-[21px] border-l border-[#b5b5b5]">
          {projectTree.map(([icon, label]) => (
            <li key={label} className={treeRow}>
              <span className="h-px w-[7px] bg-[#b5b5b5]" />
              <Icon name={icon} />
              <span className="pl-0.5 whitespace-nowrap">{label}</span>
            </li>
          ))}
        </ul>
      </div>
      <VScroll before="h-0" thumb="h-3" />
    </div>
    <div className="flex shrink-0 bg-[#f0f0f0]">
      <HScroll before="w-[2px]" thumb="w-12" />
      <span className="w-[11px]" />
    </div>
    <nav className="flex h-[18px] shrink-0 items-center border-t border-[#6b93d6] bg-[#a9cbfd] whitespace-nowrap text-[#1d4b9c]">
      <button type="button" className="flex h-full items-center gap-px border-r border-[#7ba1df] bg-[#d8e7ff] pr-1 pl-0.5">
        <Icon name="project" />
        Projekt-...
      </button>
      <button type="button" className="flex h-3 items-center gap-px border-r border-[#7ba1df] pr-1">
        <Icon name="column" />
        Lastfallf...
      </button>
      <label className="relative flex items-center gap-0.5 pl-0.5">
        <input type="checkbox" defaultChecked className="peer size-[9px] appearance-none border border-[#5f7fb8] bg-white" />
        <Check size={9} strokeWidth={4} className="absolute left-0.5 hidden text-[#2c3f66] peer-checked:block" />
        Sichtbar...
      </label>
    </nav>
  </section>
)

export default function App() {
  return (
    <div className="flex h-screen flex-col overflow-hidden bg-[#5f6670] pr-1 pb-1 font-['Open_Sans','Noto_Sans',sans-serif] text-[8px] leading-3 text-[#1c1c1c]">
      <div className="flex min-h-0 flex-1 flex-col border-t border-[#8a8a8a] bg-[#bbd7ff]">
        <div className="flex h-[21px] shrink-0 items-center bg-white pl-1.5">
          <Icon name="house" />
          <h1 className="flex-1 pl-0.5">Beispielprojekt - Baustatik</h1>
          <div className="flex items-center gap-[21px] pr-2.5">
            <button type="button" aria-label="Minimieren"><Minus size={10} strokeWidth={2} /></button>
            <button type="button" aria-label="Maximieren"><Square size={9} strokeWidth={2.5} /></button>
            <button type="button" aria-label="Schließen"><X size={12} strokeWidth={2} /></button>
          </div>
        </div>
        <nav className="flex h-4 shrink-0 items-center gap-3 pl-[11px] text-[#1e2f57]">
          {menu.map((entry) => (
            <button key={entry} type="button">{entry}</button>
          ))}
        </nav>
        <div className="flex h-4 shrink-0 items-center">
          <div className="flex h-4 items-center rounded-r bg-linear-to-b from-[#e3eeff] to-[#bad5fc] pr-px pl-0.5">
            {mainTools.map((group, index) => (
              <React.Fragment key={index}>
                {index > 0 && <Separator />}
                {group.map(([name, label]) => (
                  <ToolButton key={label} name={name} label={label} />
                ))}
              </React.Fragment>
            ))}
            <button type="button" aria-label="Funktion" className="w-4 text-center font-['Liberation_Serif',serif] text-[10px] font-bold text-black italic">
              fx
            </button>
          </div>
        </div>
        <main className="flex min-h-0 flex-1 gap-[5px] bg-[#7ba4e4] pr-0.5 pl-0.5">
          <aside className="flex w-[140px] shrink-0 flex-col gap-1 pt-px">
            <DocumentPanel />
            <PropertyPanel />
          </aside>
          <div className="flex min-w-0 flex-1 flex-col gap-1 pt-px">
            <EditorPanel />
            <TablePanel />
          </div>
          <aside className="flex w-40 shrink-0 flex-col gap-1 pt-px">
            <ForwardPanel />
            <ProjectPanel />
          </aside>
        </main>
        <footer className="flex h-4 shrink-0 items-end justify-end bg-linear-to-b from-[#e3eeff] to-[#a5c9fc] p-0.5">
          <svg viewBox="0 0 9 9" className="size-[9px]" aria-hidden="true">
            <path d="M7 1h1v1H7zM4 4h1v1H4zM7 4h1v1H7zM1 7h1v1H1zM4 7h1v1H4zM7 7h1v1H7z" fill="#6f93cf" />
          </svg>
        </footer>
      </div>
    </div>
  )
}
